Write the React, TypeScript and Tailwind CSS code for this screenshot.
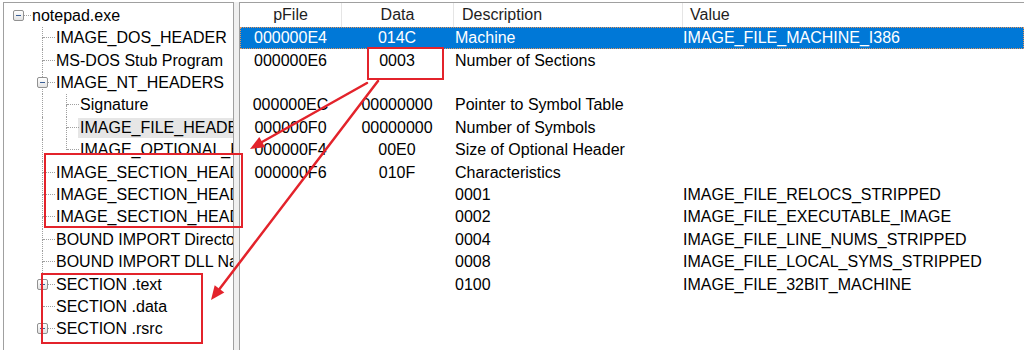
import React from "react";

type TNode = { label: string; children?: TNode[]; collapsed?: boolean; selected?: boolean };

const tree: TNode = {
  label: "notepad.exe",
  children: [
    { label: "IMAGE_DOS_HEADER" },
    { label: "MS-DOS Stub Program" },
    {
      label: "IMAGE_NT_HEADERS",
      children: [
        { label: "Signature" },
        { label: "IMAGE_FILE_HEADER", selected: true },
        { label: "IMAGE_OPTIONAL_HEADER" },
      ],
    },
    { label: "IMAGE_SECTION_HEADER .text" },
    { label: "IMAGE_SECTION_HEADER .data" },
    { label: "IMAGE_SECTION_HEADER .rsrc" },
    { label: "BOUND IMPORT Directory Table" },
    { label: "BOUND IMPORT DLL Names" },
    { label: "SECTION .text", collapsed: true },
    { label: "SECTION .data" },
    { label: "SECTION .rsrc", collapsed: true },
  ],
};

type Row = {
  label: string;
  guides: boolean[];
  hasParent: boolean;
  isLast: boolean;
  box: "none" | "minus" | "plus";
  selected: boolean;
};

function flatten(node: TNode, guides: boolean[], hasParent: boolean, isLast: boolean, out: Row[]) {
  const box = node.collapsed ? "plus" : node.children && node.children.length ? "minus" : "none";
  out.push({ label: node.label, guides, hasParent, isLast, box, selected: !!node.selected });
  if (node.children && !node.collapsed) {
    node.children.forEach((c, i) => {
      flatten(c, [...guides, !isLast], true, i === node.children!.length - 1, out);
    });
  }
}

const rows: Row[] = [];
flatten(tree, [], false, true, rows);

function Connector({ row }: { row: Row }) {
  return (
    <div className="relative grid h-full w-[24px] shrink-0 grid-cols-[12px_12px] grid-rows-2">
      <div className={row.hasParent ? "border-r border-dotted border-[#a0a0a0]" : ""} />
      <div className="border-b border-dotted border-[#a0a0a0]" />
      <div className={!row.isLast ? "border-r border-dotted border-[#a0a0a0]" : ""} />
      <div />
      {row.box !== "none" && (
        <div className="absolute left-[6px] top-[calc(50%-6px)] flex h-[11px] w-[11px] items-center justify-center rounded-[2px] border border-[#919191] bg-gradient-to-b from-white to-[#e2e2e2]">
          <div className="relative flex h-[5px] w-[5px] items-center justify-center">
            <div className="h-[1px] w-[5px] bg-[#3a5f96]" />
            {row.box === "plus" && <div className="absolute left-[2px] top-0 h-[5px] w-[1px] bg-[#3a5f96]" />}
          </div>
        </div>
      )}
    </div>
  );
}

function TreeRow({ row }: { row: Row }) {
  return (
    <div className="flex h-[22.4px] items-stretch">
      {row.guides.map((g, i) => (
        <div key={i} className="grid h-full w-[24px] shrink-0 grid-cols-[12px_12px]">
          <div className={g ? "border-r border-dotted border-[#a0a0a0]" : ""} />
          <div />
        </div>
      ))}
      <Connector row={row} />
      <div className="flex h-full items-center">
        <span
          className={
            "-ml-[1px] h-[20px] whitespace-nowrap px-[2px] leading-[20px] text-black " +
            (row.selected ? "bg-[#e6e6e6]" : "")
          }
        >
          {row.label}
        </span>
      </div>
    </div>
  );
}

type LRow = { p: string; d: string; desc: string; v: string; sel?: boolean };
const listRows: LRow[] = [
  { p: "000000E4", d: "014C", desc: "Machine", v: "IMAGE_FILE_MACHINE_I386", sel: true },
  { p: "000000E6", d: "0003", desc: "Number of Sections", v: "" },
  { p: "", d: "", desc: "", v: "" },
  { p: "000000EC", d: "00000000", desc: "Pointer to Symbol Table", v: "" },
  { p: "000000F0", d: "00000000", desc: "Number of Symbols", v: "" },
  { p: "000000F4", d: "00E0", desc: "Size of Optional Header", v: "" },
  { p: "000000F6", d: "010F", desc: "Characteristics", v: "" },
  { p: "", d: "", desc: "0001", v: "IMAGE_FILE_RELOCS_STRIPPED" },
  { p: "", d: "", desc: "0002", v: "IMAGE_FILE_EXECUTABLE_IMAGE" },
  { p: "", d: "", desc: "0004", v: "IMAGE_FILE_LINE_NUMS_STRIPPED" },
  { p: "", d: "", desc: "0008", v: "IMAGE_FILE_LOCAL_SYMS_STRIPPED" },
  { p: "", d: "", desc: "0100", v: "IMAGE_FILE_32BIT_MACHINE" },
];

export default function App() {
  return (
    <div className="relative h-[350px] w-[1024px] overflow-hidden bg-white font-['Liberation_Sans',Arial,sans-serif] text-[16px] text-black">
      <div className="flex h-full pt-[2px]">
        {/* Tree panel */}
        <div className="ml-[3px] h-full w-[231px] shrink-0 overflow-hidden border-l border-r border-t border-[#a0a0a0] bg-white pl-[3px] pt-[1.7px]">
          {rows.map((r, i) => (
            <TreeRow key={i} row={r} />
          ))}
        </div>
        {/* Splitter */}
        <div className="h-full w-[5px] shrink-0 bg-[#f0f0f0]" />
        {/* List panel */}
        <div className="h-full min-w-0 flex-1 overflow-hidden border-l border-t border-[#a0a0a0] bg-white">
          <div className="flex h-[24px] items-center whitespace-nowrap text-[#1e1e1e]">
            <div className="flex h-full w-[101px] shrink-0 items-center justify-center">pFile</div>
            <div className="flex h-full w-[112px] shrink-0 items-center justify-center border-l border-[#e5e5e5]">Data</div>
            <div className="flex h-full w-[229px] shrink-0 items-center border-l border-[#e5e5e5] pl-[8px]">Description</div>
            <div className="flex h-full flex-1 items-center border-l border-[#e5e5e5] pl-[7px]">Value</div>
          </div>
          {listRows.map((r, i) => (
            <div
              key={i}
              className={
                "flex h-[22.4px] items-center whitespace-nowrap border border-dotted " +
                (r.sel ? "border-[#e8955a] bg-[#0078d7] text-white" : "border-transparent text-black")
              }
            >
              <div className="-ml-[1px] w-[101px] shrink-0 text-center">{r.p}</div>
              <div className="w-[112px] shrink-0 text-center">{r.d}</div>
              <div className="w-[229px] shrink-0 pl-[2px]">{r.desc}</div>
              <div className="flex-1 pl-[1px]">{r.v}</div>
            </div>
          ))}
        </div>
      </div>

      {/* Red annotations overlay */}
      <svg
        className="pointer-events-none absolute left-0 top-0"
        width="1024"
        height="350"
        viewBox="0 0 1024 350"
      >
        <g stroke="#e3232b" strokeWidth="2" fill="none">
          <rect x="368" y="48" width="75" height="31" />
          <rect x="45" y="154" width="197" height="73" />
          <rect x="42" y="274" width="160" height="69" />
        </g>
        <g stroke="#e3232b" strokeWidth="2.5" fill="none" strokeLinecap="round">
          <line x1="367" y1="83" x2="262" y2="142" />
          <line x1="378" y1="81" x2="219.5" y2="289" />
        </g>
        <g fill="#e3232b">
          <polygon points="250,149 259.3,136.9 265.1,147.3" />
          <polygon points="211,300 214.7,285.3 224.3,292.5" />
        </g>
      </svg>
    </div>
  );
}
